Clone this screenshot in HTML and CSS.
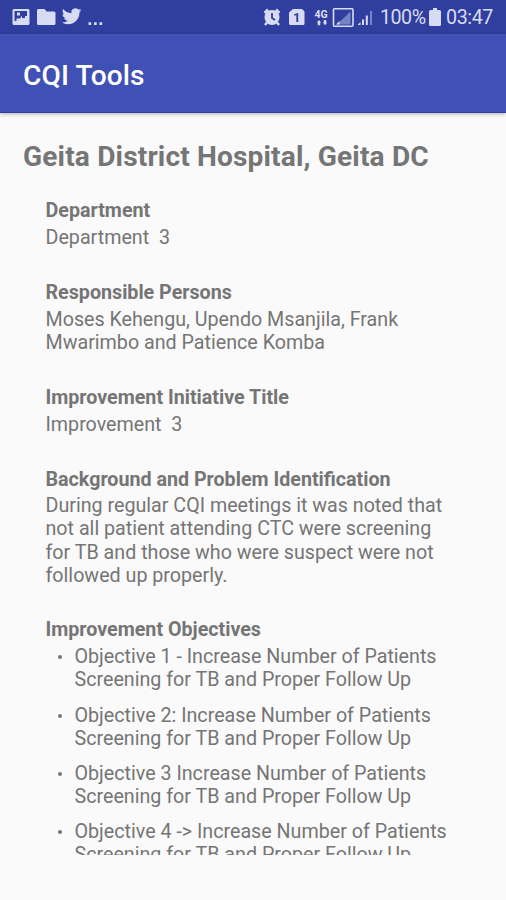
FILE: index.html
```html
<!DOCTYPE html>
<html lang="en">
<head>
    <meta charset="UTF-8">
    <meta name="viewport" content="width=device-width, initial-scale=1.0">
    <title>CQI Tools</title>
    <link rel="stylesheet" href="styles.css">
</head>
<body>
    <div class="status-bar">
        <svg class="status-icons" width="110" height="34" viewBox="0 0 110 34">
            <path fill-rule="evenodd" d="M14 9h14q1.500 0 1.500 1.500v13q0 1.500-1.500 1.500H14q-1.500 0-1.500-1.500v-13Q12.500 9 14 9zM14.500 11v10h2v-2.500h3.500l2-3v2.500h3v-2h2V11zM17 12.500h3v3h-3z"/>
            <path d="M38 9h6.500l2 2.500H54q1.500 0 1.500 1.500v10.500q0 1.500-1.500 1.500H38.500q-1.500 0-1.500-1.500V10.500Q37 9 38 9z"/>
            <path transform="translate(61.800 6.500) scale(.82)" d="M23.950 4.570a10 10 0 0 1-2.820.77 4.960 4.960 0 0 0 2.160-2.720 9.900 9.900 0 0 1-3.120 1.180 4.920 4.920 0 0 0-8.380 4.480C7.690 8.090 4.070 6.130 1.640 3.160a4.820 4.820 0 0 0-.67 2.480c0 1.710.87 3.210 2.190 4.100a4.900 4.900 0 0 1-2.230-.62v.06a4.920 4.920 0 0 0 3.950 4.830 5 5 0 0 1-2.210.08 4.940 4.940 0 0 0 4.600 3.420A9.870 9.870 0 0 1 0 19.540 14 14 0 0 0 7.550 21.750c9.050 0 14-7.500 14-13.980 0-.21 0-.42-.02-.63a9.940 9.940 0 0 0 2.420-2.570z"/>
            <path d="M88.500 22.300h2.700v2.700h-2.700zM94 22.300h2.700v2.700H94zM99.500 22.300h2.700v2.700h-2.700z"/>
        </svg>
        <div class="status-right">
            <svg class="status-icons" width="118" height="34" viewBox="260 0 118 34">
                <circle cx="272" cy="17.500" r="7.500"/>
                <path class="line" d="M264.500 13l3.500-3.500M279.500 13L276 9.500M267 22.500l-2 2.500M277 22.500l2 2.500"/>
                <path class="cut" d="M272 13v5l3 2"/>
                <path d="M293 9h9l2.500 2.500v12q0 1.500-1.500 1.500h-12.500q-1.500 0-1.500-1.500V12.500z"/>
                <text class="sim" x="293" y="22">1</text>
                <text class="network" x="314.500" y="17.500">4G</text>
                <path d="M319 20l2.200 2.500h-1v2.700h-2.400v-2.700h-1zM325 25.200l-2.200-2.700h1V20h2.400v2.500h1z"/>
                <rect class="frame" x="333.500" y="8.800" width="19.500" height="17.500" rx="1"/>
                <path class="dim" d="M337 24.500L350.500 11.500v13z"/>
                <path d="M336 24.500l3.500-3.500v3.500z"/>
                <path d="M357.500 25l3-3v3zM362 19.500h2V25h-2zM365.800 15.500h2V25h-2z"/>
                <path class="dim" d="M370 11h2v14h-2z"/>
            </svg>
            <span class="battery-level">100%</span>
            <svg class="battery" width="12" height="18" viewBox="0 0 12 18">
                <path d="M4 0h4v2h2.500q1.500 0 1.500 1.500v13q0 1.500-1.500 1.500h-9Q0 18 0 16.500v-13Q0 2 1.500 2H4z"/>
            </svg>
            <span class="clock">03:47</span>
        </div>
    </div>

    <header class="app-bar">
        <h1>CQI Tools</h1>
    </header>

    <main class="content">
        <h2>Geita District Hospital, Geita DC</h2>

        <section>
            <h3>Department</h3>
            <p>Department&nbsp; 3</p>
        </section>

        <section>
            <h3>Responsible Persons</h3>
            <p>Moses Kehengu, Upendo Msanjila, Frank<br>Mwarimbo and Patience Komba</p>
        </section>

        <section>
            <h3>Improvement Initiative Title</h3>
            <p>Improvement&nbsp; 3</p>
        </section>

        <section>
            <h3>Background and Problem Identification</h3>
            <p>During regular CQI meetings it was noted that<br>not all patient attending CTC were screening<br>for TB and those who were suspect were not<br>followed up properly.</p>
        </section>

        <section>
            <h3>Improvement Objectives</h3>
            <ul>
                <li>Objective 1 - Increase Number of Patients<br>Screening for TB and Proper Follow Up</li>
                <li>Objective 2: Increase Number of Patients<br>Screening for TB and Proper Follow Up</li>
                <li>Objective 3 Increase Number of Patients<br>Screening for TB and Proper Follow Up</li>
                <li>Objective 4 -&gt; Increase Number of Patients<br>Screening for TB and Proper Follow Up</li>
            </ul>
        </section>
    </main>
</body>
</html>
```

FILE: styles.css
```css
* {
    box-sizing: border-box;
}

body {
    margin: 0;
    height: 900px;
    overflow: hidden;
    background: #fafafa;
    color: #757575;
    font-family: Roboto, "Noto Sans", sans-serif;
    font-size: 19.68px;
    line-height: 23.1px;
}

h1, h2, h3, p, ul {
    margin: 0;
    padding: 0;
}

.status-bar {
    display: flex;
    justify-content: space-between;
    height: 34px;
    background: #303f9f;
    color: #d8dcf2;
}

.status-right {
    display: flex;
    align-items: center;
    width: 246px;
}

.status-icons, .battery {
    display: block;
    flex: none;
    fill: #d8dcf2;
}

.line {
    stroke: #d8dcf2;
    stroke-width: 2.5;
}

.cut {
    fill: none;
    stroke: #303f9f;
    stroke-width: 1.8;
}

.frame {
    fill: none;
    stroke: #d8dcf2;
    stroke-width: 1.6;
}

.dim {
    fill: #7883c4;
}

.sim {
    fill: #303f9f;
    font-size: 13px;
    font-weight: 700;
}

.network {
    font-size: 10.5px;
    font-weight: 700;
}

.battery-level, .clock {
    padding-top: 2px;
}

.battery-level {
    width: 47px;
    margin-left: 2px;
    letter-spacing: -0.5px;
}

.clock {
    margin-left: 5px;
    letter-spacing: -0.4px;
}

.battery {
    margin-left: 2px;
}

.app-bar {
    display: flex;
    align-items: center;
    height: 79px;
    padding: 5px 23px 0;
    background: #3f51b5;
    border-bottom: 1px solid #303f9f;
    box-shadow: 0 1px 4px rgba(0, 0, 0, 0.3);
}

h1 {
    color: #fff;
    font-size: 28.1px;
    font-weight: 500;
    letter-spacing: 0.1px;
}

.content {
    height: 742px;
    padding: 27px 23px 0;
    overflow: hidden;
}

h2 {
    margin-bottom: 26.4px;
    font-size: 28.1px;
    line-height: 33px;
    font-weight: 700;
    letter-spacing: 0.15px;
}

section {
    margin: 0 0 31.7px 22.5px;
}

h3 {
    margin-bottom: 3.8px;
    font-size: 19.68px;
    font-weight: 700;
}

ul {
    list-style: none;
}

li {
    position: relative;
    margin-bottom: 12.1px;
    padding-left: 29px;
}

li::before {
    content: "";
    position: absolute;
    left: 12.500px;
    top: 10px;
    width: 4px;
    height: 4px;
    border-radius: 50%;
    background: #757575;
}
```
